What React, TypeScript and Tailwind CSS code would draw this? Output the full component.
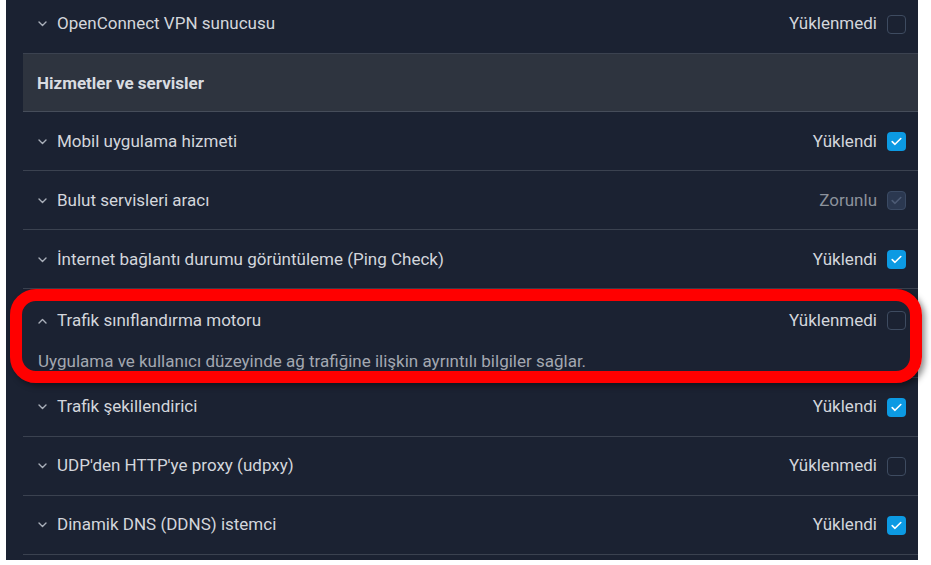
import { Fragment } from "react";

type Status = "off" | "on" | "forced";

const before: { title: string; status: Status }[] = [
  { title: "Mobil uygulama hizmeti", status: "on" },
  { title: "Bulut servisleri aracı", status: "forced" },
  { title: "İnternet bağlantı durumu görüntüleme (Ping Check)", status: "on" },
];

const after: { title: string; status: Status }[] = [
  { title: "Trafik şekillendirici", status: "on" },
  { title: "UDP'den HTTP'ye proxy (udpxy)", status: "off" },
  { title: "Dinamik DNS (DDNS) istemci", status: "on" },
];

function Chevron({ up = false }: { up?: boolean }) {
  return (
    <svg width="9" height="6" viewBox="0 0 9 6" className="shrink-0 text-[#aab0ba]">
      <polyline
        points={up ? "1,5 4.5,1.5 8,5" : "1,1 4.5,4.5 8,1"}
        fill="none"
        stroke="currentColor"
        strokeWidth="1.4"
        strokeLinecap="round"
        strokeLinejoin="round"
      />
    </svg>
  );
}

function Check({ status }: { status: Status }) {
  if (status === "off") {
    return <span className="size-[19px] shrink-0 rounded-[4px] border border-[#3e4b60] bg-[#1b2232]" />;
  }
  const forced = status === "forced";
  return (
    <span
      className={
        "grid size-[19px] shrink-0 place-items-center rounded-[4px] " +
        (forced ? "border border-[#3b4a63] bg-[#2b3850]" : "bg-[#0c9ae3]")
      }
    >
      <svg width="11" height="9" viewBox="0 0 11 9">
        <polyline
          points="1.2,4.6 4,7.3 9.8,1.5"
          fill="none"
          stroke={forced ? "#4d5b75" : "#ffffff"}
          strokeWidth="1.6"
          strokeLinecap="round"
          strokeLinejoin="round"
        />
      </svg>
    </span>
  );
}

function Row({ title, status, nudge = false }: { title: string; status: Status; nudge?: boolean }) {
  const label = status === "on" ? "Yüklendi" : status === "forced" ? "Zorunlu" : "Yüklenmedi";
  return (
    <div
      className={
        "flex h-[59px] items-center border-b border-[#3b4250] pl-[15px] pr-[12px] " + (nudge ? "pt-[1px]" : "")
      }
    >
      <Chevron />
      <span className="ml-[10px] flex-1 text-[#d3d6dc]">{title}</span>
      <span className={status === "forced" ? "text-[#8c929c]" : "text-[#d3d6dc]"}>{label}</span>
      <span className="ml-[10px] flex">
        <Check status={status} />
      </span>
    </div>
  );
}

export default function App() {
  return (
    <div className="relative h-[565px] w-[931px] overflow-hidden bg-white font-['Roboto','Liberation_Sans',sans-serif] text-[17px]">
      <div className="ml-[6px] h-full w-[912px] bg-[#1b2232]">
        <div className="-mt-[5px] ml-[17px]">
          <Row title="OpenConnect VPN sunucusu" status="off" />
          <div className="flex h-[58px] items-center border-b border-[#464d5a] bg-[#2e343f] pl-[14px] pt-[2px]">
            <span className="font-bold text-[#d9dce1]">Hizmetler ve servisler</span>
          </div>
          {before.map((r) => (
            <Fragment key={r.title}>
              <Row {...r} nudge />
            </Fragment>
          ))}
          <div className="h-[89px] border-b border-[#3b4250] pl-[15px] pr-[12px] pt-[19px]">
            <div className="flex items-center">
              <Chevron up />
              <span className="ml-[10px] flex-1 text-[#d3d6dc]">Trafik sınıflandırma motoru</span>
              <span className="text-[#d3d6dc]">Yüklenmedi</span>
              <span className="ml-[10px] flex">
                <Check status="off" />
              </span>
            </div>
            <p className="mt-[15px] text-[#a3a8b1]">
              Uygulama ve kullanıcı düzeyinde ağ trafiğine ilişkin ayrıntılı bilgiler sağlar.
            </p>
          </div>
          {after.map((r) => (
            <Fragment key={r.title}>
              <Row {...r} />
            </Fragment>
          ))}
        </div>
      </div>
      <div className="pointer-events-none absolute left-[10px] top-[289px] h-[94px] w-[912px] rounded-[26px] border-[12px] border-[#ff0000] shadow-[3px_3px_6px_rgba(0,0,0,0.45)]" />
    </div>
  );
}
